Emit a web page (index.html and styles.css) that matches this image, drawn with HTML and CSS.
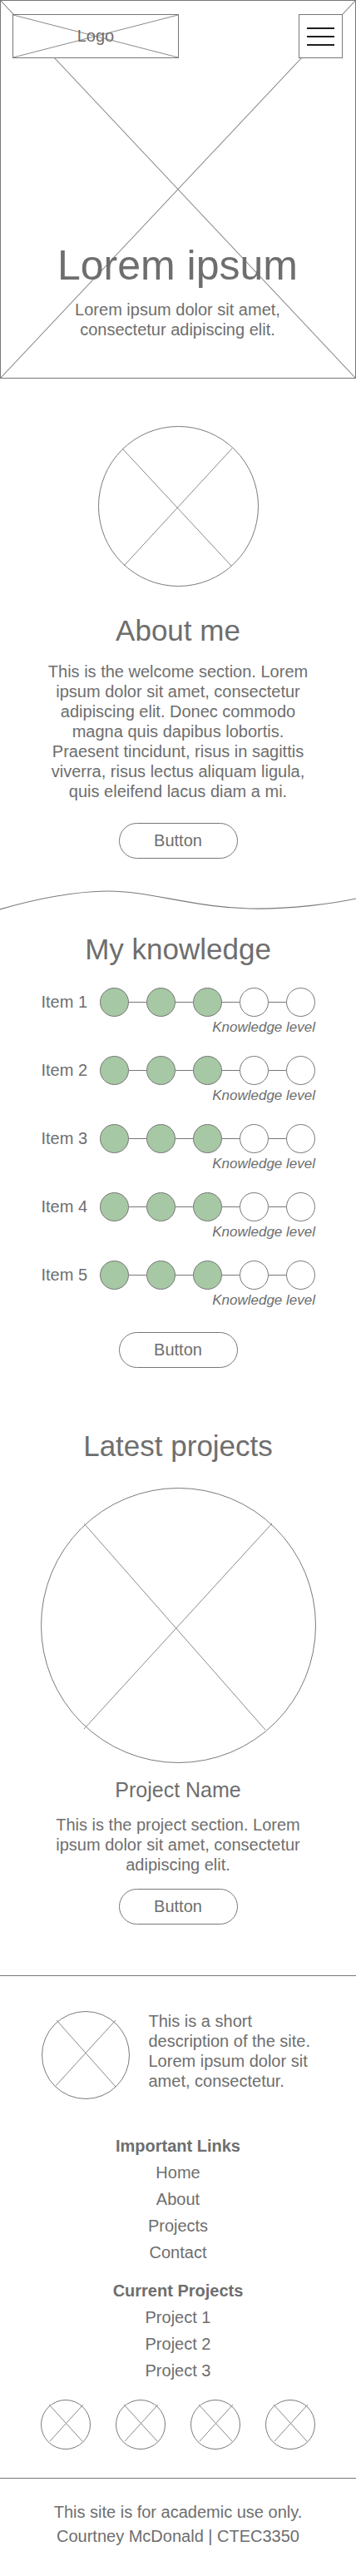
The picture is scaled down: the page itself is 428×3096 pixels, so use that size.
FILE: index.html
```html
<!DOCTYPE html>
<html lang="en">
<head>
<meta charset="utf-8">
<title>Portfolio wireframe</title>
<link rel="stylesheet" href="styles.css">
</head>
<body>
<header class="hero">
  <svg class="hero-x" viewBox="0 0 100 100" preserveAspectRatio="none" aria-hidden="true">
    <line x1="0" y1="0" x2="100" y2="100"/>
    <line x1="100" y1="0" x2="0" y2="100"/>
  </svg>
  <div class="topbar">
    <div class="logo">
      <svg class="logo-x" viewBox="0 0 100 100" preserveAspectRatio="none" aria-hidden="true">
        <line x1="0" y1="0" x2="100" y2="100"/>
        <line x1="100" y1="0" x2="0" y2="100"/>
      </svg>
      <span class="logo-text">Logo</span>
    </div>
    <div class="menu" aria-label="Menu">
      <span></span><span></span><span></span>
    </div>
  </div>
  <div class="hero-body">
    <h1 class="hero-title">Lorem ipsum</h1>
    <p class="hero-sub">Lorem ipsum dolor sit amet, consectetur adipiscing elit.</p>
  </div>
</header>

<section class="about">
  <svg class="ph ph-about" viewBox="0 0 193 193" aria-hidden="true">
    <circle cx="96.5" cy="96.5" r="96"/>
    <line x1="29" y1="27" x2="160" y2="168"/>
    <line x1="161" y1="27" x2="31" y2="168"/>
  </svg>
  <h2 class="section-title about-title">About me</h2>
  <p class="copy about-copy">This is the welcome section. Lorem ipsum dolor sit amet, consectetur adipiscing elit. Donec commodo magna quis dapibus lobortis. Praesent tincidunt, risus in sagittis viverra, risus lectus aliquam ligula, quis eleifend lacus diam a mi.</p>
  <a class="btn about-btn">Button</a>
</section>

<svg class="wave" viewBox="0 0 428 30" preserveAspectRatio="none" aria-hidden="true">
  <path d="M0,27 C40,15 90,5 130,5 C180,5 230,24 300,26 C350,27 400,20 428,14"/>
</svg>

<section class="knowledge">
  <h2 class="section-title knowledge-title">My knowledge</h2>
  <div class="skills">
    <div class="skill">
      <span class="skill-name">Item 1</span>
      <div class="track"><span class="dot on"></span><span class="link"></span><span class="dot on"></span><span class="link"></span><span class="dot on"></span><span class="link"></span><span class="dot"></span><span class="link"></span><span class="dot"></span></div>
      <span class="skill-caption">Knowledge level</span>
    </div>
    <div class="skill">
      <span class="skill-name">Item 2</span>
      <div class="track"><span class="dot on"></span><span class="link"></span><span class="dot on"></span><span class="link"></span><span class="dot on"></span><span class="link"></span><span class="dot"></span><span class="link"></span><span class="dot"></span></div>
      <span class="skill-caption">Knowledge level</span>
    </div>
    <div class="skill">
      <span class="skill-name">Item 3</span>
      <div class="track"><span class="dot on"></span><span class="link"></span><span class="dot on"></span><span class="link"></span><span class="dot on"></span><span class="link"></span><span class="dot"></span><span class="link"></span><span class="dot"></span></div>
      <span class="skill-caption">Knowledge level</span>
    </div>
    <div class="skill">
      <span class="skill-name">Item 4</span>
      <div class="track"><span class="dot on"></span><span class="link"></span><span class="dot on"></span><span class="link"></span><span class="dot on"></span><span class="link"></span><span class="dot"></span><span class="link"></span><span class="dot"></span></div>
      <span class="skill-caption">Knowledge level</span>
    </div>
    <div class="skill">
      <span class="skill-name">Item 5</span>
      <div class="track"><span class="dot on"></span><span class="link"></span><span class="dot on"></span><span class="link"></span><span class="dot on"></span><span class="link"></span><span class="dot"></span><span class="link"></span><span class="dot"></span></div>
      <span class="skill-caption">Knowledge level</span>
    </div>
  </div>
  <a class="btn knowledge-btn">Button</a>
</section>

<section class="projects">
  <h2 class="section-title projects-title">Latest projects</h2>
  <svg class="ph ph-project" viewBox="0 0 331 331" aria-hidden="true">
    <circle cx="165.5" cy="165.5" r="165"/>
    <line x1="52" y1="43" x2="270" y2="291"/>
    <line x1="278" y1="43" x2="52" y2="290"/>
  </svg>
  <h3 class="project-name">Project Name</h3>
  <p class="copy project-copy">This is the project section. Lorem ipsum dolor sit amet, consectetur adipiscing elit.</p>
  <a class="btn project-btn">Button</a>
</section>

<footer class="footer">
  <div class="rule"></div>
  <div class="footer-about">
    <svg class="ph ph-footer" viewBox="0 0 106 106" aria-hidden="true">
      <circle cx="53" cy="53" r="52.5"/>
      <line x1="18" y1="11" x2="89" y2="91"/>
      <line x1="89" y1="11" x2="16" y2="91"/>
    </svg>
    <p class="footer-desc">This is a short description of the site. Lorem ipsum dolor sit amet, consectetur.</p>
  </div>
  <div class="link-group first-group">
    <h4 class="group-title">Important Links</h4>
    <ul class="group-list">
      <li>Home</li>
      <li>About</li>
      <li>Projects</li>
      <li>Contact</li>
    </ul>
  </div>
  <div class="link-group second-group">
    <h4 class="group-title">Current Projects</h4>
    <ul class="group-list">
      <li>Project 1</li>
      <li>Project 2</li>
      <li>Project 3</li>
    </ul>
  </div>
  <div class="social">
    <svg class="ph ph-social" viewBox="0 0 60 60" aria-hidden="true"><circle cx="30" cy="30" r="29.5"/><line x1="10" y1="6" x2="50" y2="50"/><line x1="51" y1="6" x2="11" y2="50"/></svg>
    <svg class="ph ph-social" viewBox="0 0 60 60" aria-hidden="true"><circle cx="30" cy="30" r="29.5"/><line x1="10" y1="6" x2="50" y2="50"/><line x1="51" y1="6" x2="11" y2="50"/></svg>
    <svg class="ph ph-social" viewBox="0 0 60 60" aria-hidden="true"><circle cx="30" cy="30" r="29.5"/><line x1="10" y1="6" x2="50" y2="50"/><line x1="51" y1="6" x2="11" y2="50"/></svg>
    <svg class="ph ph-social" viewBox="0 0 60 60" aria-hidden="true"><circle cx="30" cy="30" r="29.5"/><line x1="10" y1="6" x2="50" y2="50"/><line x1="51" y1="6" x2="11" y2="50"/></svg>
  </div>
  <div class="rule bottom-rule"></div>
  <p class="legal">This site is for academic use only.<br>Courtney McDonald | CTEC3350</p>
</footer>
</body>
</html>
```

FILE: styles.css
```css
* {
  box-sizing: border-box;
}

html, body {
  margin: 0;
  padding: 0;
  background: #ffffff;
}

body {
  width: 428px;
  font-family: "Liberation Sans", Arial, Helvetica, sans-serif;
  color: #6e6e6e;
}

/* ---------- Hero ---------- */
.hero {
  position: relative;
  height: 455px;
  border: 1px solid #777777;
  display: flex;
  flex-direction: column;
  padding: 16px 15px 46px 14px;
}

.hero-x {
  position: absolute;
  inset: 0;
  width: 100%;
  height: 100%;
}

.hero-x line,
.logo-x line {
  stroke: #8a8a8a;
  stroke-width: 1;
  vector-effect: non-scaling-stroke;
}

.topbar {
  position: relative;
  display: flex;
  justify-content: space-between;
  align-items: flex-start;
}

.logo {
  position: relative;
  width: 200px;
  height: 53px;
  border: 1px solid #777777;
  background: #ffffff;
  display: flex;
  align-items: center;
  justify-content: center;
}

.logo-x {
  position: absolute;
  inset: 0;
  width: 100%;
  height: 100%;
}

.logo-text {
  position: relative;
  font-size: 20px;
  line-height: 23px;
}

.menu {
  position: relative;
  width: 53px;
  height: 53px;
  border: 1px solid #777777;
  background: #ffffff;
  display: flex;
  flex-direction: column;
  justify-content: center;
  align-items: center;
  gap: 8px;
}

.menu span {
  display: block;
  width: 33px;
  height: 2px;
  background: #1e1e1e;
}

.hero-body {
  position: relative;
  margin-top: auto;
  text-align: center;
}

.hero-title {
  margin: 0;
  font-size: 50px;
  font-weight: normal;
  line-height: 57px;
}

.hero-sub {
  width: 330px;
  margin: 12px auto 0;
  font-size: 20px;
  line-height: 24px;
}

/* ---------- Shared ---------- */
.ph {
  display: block;
  margin-left: auto;
  margin-right: auto;
}

.ph circle {
  fill: none;
  stroke: #7a7a7a;
  stroke-width: 1;
}

.ph line {
  stroke: #8a8a8a;
  stroke-width: 1;
}

.section-title {
  margin: 0;
  font-size: 35px;
  font-weight: normal;
  line-height: 40px;
  text-align: center;
}

.copy {
  width: 330px;
  margin: 0 auto;
  font-size: 20px;
  line-height: 24px;
  text-align: center;
}

.btn {
  display: flex;
  align-items: center;
  justify-content: center;
  width: 143px;
  height: 43px;
  margin: 0 auto;
  border: 1px solid #777777;
  border-radius: 22px;
  font-size: 20px;
  color: #6e6e6e;
}

/* ---------- About ---------- */
.about {
  padding-top: 57px;
}

.ph-about {
  width: 193px;
  height: 193px;
}

.about-title {
  margin-top: 33px;
}

.about-copy {
  margin-top: 17px;
}

.about-btn {
  margin-top: 26px;
}

.wave {
  display: block;
  width: 428px;
  height: 30px;
  margin-top: 34px;
}

.wave path {
  fill: none;
  stroke: #7a7a7a;
  stroke-width: 1.2;
}

/* ---------- Knowledge ---------- */
.knowledge-title {
  margin-top: 25px;
}

.skills {
  margin-top: 26px;
}

.skill {
  display: grid;
  grid-template-columns: 56px 259px;
  column-gap: 15px;
  justify-content: center;
}

.skill + .skill {
  margin-top: 24px;
}

.skill-name {
  font-size: 20px;
  line-height: 35px;
  text-align: right;
  white-space: nowrap;
}

.track {
  display: flex;
  align-items: center;
  height: 35px;
}

.dot {
  flex: 0 0 35px;
  width: 35px;
  height: 35px;
  border: 1px solid #777777;
  border-radius: 50%;
  background: #ffffff;
}

.dot.on {
  background: #a6c8a4;
}

.link {
  flex: 0 0 21px;
  height: 1px;
  background: #777777;
}

.skill-caption {
  grid-column: 2;
  margin-top: 3px;
  font-size: 17px;
  font-style: italic;
  line-height: 20px;
  text-align: right;
}

.knowledge-btn {
  margin-top: 28px;
}

/* ---------- Projects ---------- */
.projects-title {
  margin-top: 74px;
}

.ph-project {
  width: 331px;
  height: 331px;
  margin-top: 30px;
}

.project-name {
  margin: 18px 0 0;
  font-size: 25px;
  font-weight: normal;
  line-height: 29px;
  text-align: center;
}

.project-copy {
  margin-top: 15px;
}

.project-btn {
  margin-top: 17px;
}

/* ---------- Footer ---------- */
.rule {
  height: 1px;
  background: #777777;
  margin-top: 61px;
}

.footer-about {
  display: flex;
  justify-content: center;
  align-items: flex-start;
  gap: 23px;
  margin-top: 42px;
}

.ph-footer {
  flex: 0 0 106px;
  width: 106px;
  height: 106px;
  margin: 0;
}

.footer-desc {
  width: 200px;
  margin: 0;
  font-size: 20px;
  line-height: 24px;
}

.link-group {
  text-align: center;
  font-size: 20px;
  line-height: 32px;
}

.first-group {
  margin-top: 40px;
}

.second-group {
  margin-top: 14px;
}

.group-title {
  margin: 0;
  font-size: 20px;
  font-weight: bold;
}

.group-list {
  list-style: none;
  margin: 0;
  padding: 0;
}

.social {
  display: flex;
  justify-content: center;
  gap: 30px;
  margin-top: 19px;
}

.ph-social {
  width: 60px;
  height: 60px;
  margin: 0;
}

.bottom-rule {
  margin-top: 34px;
}

.legal {
  margin: 26px 0 0;
  padding-bottom: 27px;
  font-size: 20px;
  line-height: 29px;
  text-align: center;
}
```
